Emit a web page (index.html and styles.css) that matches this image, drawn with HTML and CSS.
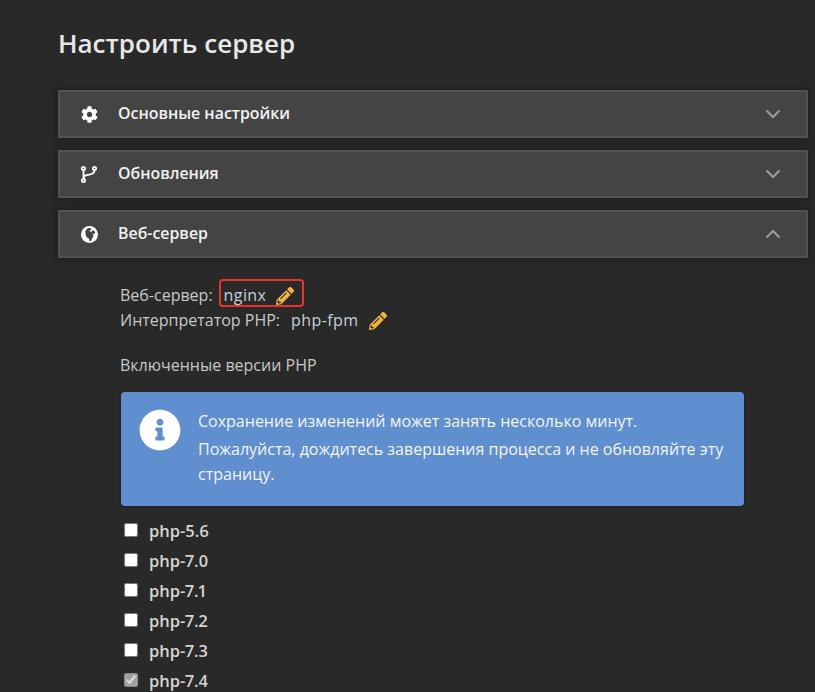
FILE: index.html
```html
<!DOCTYPE html>
<html lang="ru">
<head>
<meta charset="utf-8">
<title>Настроить сервер</title>
<link rel="stylesheet" href="styles.css">
</head>
<body>
<main class="page">
  <h1 class="title">Настроить сервер</h1>
  <section class="panel">
    <svg class="panel-icon" viewBox="0 0 512 512"><path fill="#fff" d="M487.4 315.7l-42.6-24.6c4.3-23.2 4.3-47 0-70.2l42.6-24.6c4.9-2.8 7.1-8.6 5.5-14-11.1-35.6-30-67.8-54.7-94.6-3.8-4.1-10-5.1-14.8-2.3L380.8 110c-17.9-15.4-38.5-27.3-60.8-35.1V25.8c0-5.6-3.9-10.5-9.4-11.7-36.7-8.2-74.3-7.8-109.2 0-5.5 1.2-9.4 6.1-9.4 11.7V75c-22.2 7.9-42.8 19.8-60.8 35.1L88.7 85.5c-4.9-2.8-11-1.9-14.8 2.3-24.7 26.7-43.6 58.9-54.7 94.6-1.7 5.4.6 11.2 5.5 14L67.3 221c-4.3 23.2-4.3 47 0 70.2l-42.6 24.6c-4.9 2.8-7.1 8.6-5.5 14 11.1 35.6 30 67.8 54.7 94.6 3.8 4.1 10 5.1 14.8 2.3l42.6-24.6c17.9 15.4 38.5 27.3 60.8 35.1v49.2c0 5.6 3.9 10.5 9.4 11.7 36.7 8.2 74.3 7.8 109.2 0 5.5-1.2 9.4-6.1 9.4-11.7v-49.2c22.2-7.9 42.8-19.8 60.8-35.1l42.6 24.6c4.9 2.8 11 1.9 14.8-2.3 24.7-26.7 43.6-58.9 54.7-94.6 1.5-5.5-.7-11.3-5.6-14.1zM256 336c-44.1 0-80-35.9-80-80s35.9-80 80-80 80 35.9 80 80-35.9 80-80 80z"/></svg>
    <span class="panel-title">Основные настройки</span>
    <svg class="chevron" viewBox="0 0 16 10"><path d="M1.500 1.500 8 8l6.500-6.500"/></svg>
  </section>
  <section class="panel">
    <svg class="panel-icon" viewBox="0 0 17 17"><g fill="none" stroke="#fff" stroke-width="1.800"><circle cx="2.500" cy="2.500" r="1.600"/><circle cx="2.500" cy="14.500" r="1.600"/><circle cx="13.500" cy="2.500" r="1.600"/><path d="M2.500 4.100v8.800M13.500 4.100c0 2.900-1.500 3.900-4 4.300-3.500.6-7 .4-7 4.500"/></g></svg>
    <span class="panel-title">Обновления</span>
    <svg class="chevron" viewBox="0 0 16 10"><path d="M1.500 1.500 8 8l6.500-6.500"/></svg>
  </section>
  <section class="panel">
    <svg class="panel-icon" viewBox="0 0 18 18"><circle cx="9" cy="9" r="9" fill="#fff"/><path fill="#444" d="M4.500 5.500 7 2.500l3-.5 1 2-2 1 1 1.500 2.500-2 2.500 1.500-.5 2.500-2.500-.5 1.500 2-1.500 3-1.500 2.500-1.500 1-.5-3-2.500-1.500-1-2.500z"/></svg>
    <span class="panel-title">Веб-сервер</span>
    <svg class="chevron" viewBox="0 0 16 10"><path d="M1.500 8.500 8 2l6.500 6.500"/></svg>
  </section>
  <div class="content">
    <div class="meta">
      <div class="meta-row"><span>Веб-сервер:</span><span class="mark"><span>nginx</span><svg class="pencil" viewBox="0 0 512 512"><path d="M497.9 142.1l-46.1 46.1c-4.7 4.7-12.3 4.7-17 0l-111-111c-4.7-4.7-4.7-12.3 0-17l46.1-46.1c18.7-18.7 49.1-18.7 67.9 0l60.1 60.1c18.8 18.7 18.8 49.1 0 67.9zM284.2 99.8L21.6 362.4.4 483.9c-2.9 16.4 11.4 30.6 27.8 27.8l121.5-21.3 262.6-262.6c4.7-4.7 4.7-12.3 0-17l-111-111c-4.8-4.7-12.4-4.7-17.1 0zM124.1 339.9c-5.5-5.5-5.5-14.3 0-19.8l154-154c5.500-5.500 14.300-5.500 19.800 0s5.500 14.300 0 19.800l-154 154c-5.500 5.500-14.300 5.500-19.800 0zM88 424h48v36.300l-64.500 11.300-31.100-31.100L51.700 376H88v48z"/></svg></span></div>
      <div class="meta-row"><span>Интерпретатор PHP:</span><span class="value"><span>php-fpm</span><svg class="pencil" viewBox="0 0 512 512"><path d="M497.9 142.1l-46.1 46.1c-4.7 4.7-12.3 4.7-17 0l-111-111c-4.7-4.7-4.7-12.3 0-17l46.1-46.1c18.7-18.7 49.1-18.7 67.9 0l60.1 60.1c18.8 18.7 18.8 49.1 0 67.9zM284.2 99.8L21.6 362.4.4 483.9c-2.9 16.4 11.4 30.6 27.8 27.8l121.5-21.3 262.6-262.6c4.7-4.7 4.7-12.3 0-17l-111-111c-4.8-4.7-12.4-4.7-17.1 0zM124.1 339.9c-5.5-5.5-5.5-14.3 0-19.8l154-154c5.500-5.500 14.300-5.500 19.800 0s5.500 14.300 0 19.800l-154 154c-5.500 5.500-14.300 5.500-19.800 0zM88 424h48v36.300l-64.500 11.300-31.100-31.100L51.700 376H88v48z"/></svg></span></div>
    </div>
    <p class="versions">Включенные версии PHP</p>
    <div class="notice">
      <svg class="notice-icon" viewBox="0 0 512 512"><path fill="#fff" d="M256 8C119 8 8 119 8 256s111 248 248 248 248-111 248-248S393 8 256 8zm0 110c23.200 0 42 18.800 42 42s-18.800 42-42 42-42-18.800-42-42 18.800-42 42-42zm56 254c0 6.600-5.400 12-12 12h-88c-6.600 0-12-5.400-12-12v-24c0-6.600 5.400-12 12-12h12v-64h-12c-6.600 0-12-5.400-12-12v-24c0-6.600 5.400-12 12-12h64c6.600 0 12 5.400 12 12v100h12c6.600 0 12 5.400 12 12v24z"/></svg>
      <div class="notice-text">
        <p>Сохранение изменений может занять несколько минут.</p>
        <p>Пожалуйста, дождитесь завершения процесса и не обновляйте эту страницу.</p>
      </div>
    </div>
    <ul class="php-list">
      <li><label class="php-item"><input type="checkbox"><span>php-5.6</span></label></li>
      <li><label class="php-item"><input type="checkbox"><span>php-7.0</span></label></li>
      <li><label class="php-item"><input type="checkbox"><span>php-7.1</span></label></li>
      <li><label class="php-item"><input type="checkbox"><span>php-7.2</span></label></li>
      <li><label class="php-item"><input type="checkbox"><span>php-7.3</span></label></li>
      <li><label class="php-item"><input type="checkbox" checked disabled><span>php-7.4</span></label></li>
    </ul>
  </div>
</main>
</body>
</html>
```
FILE: styles.css
```css
html, body {
  margin: 0;
  height: 692px;
  overflow: hidden;
  background: #292929;
}
body {
  font-family: "Open Sans", "Noto Sans", sans-serif;
  color: #c8c8c8;
  font-size: 16px;
}
.page {
  padding: 22px 7px 0 58px;
}
.title {
  margin: 0 0 26px;
  height: 42px;
  line-height: 42px;
  font-size: 26px;
  font-weight: 600;
  color: #e8e8e8;
}
.panel {
  box-sizing: border-box;
  height: 48px;
  margin-bottom: 12px;
  display: flex;
  align-items: center;
  background: #444;
  border: 2px solid #525252;
  box-shadow: 0 0 8px rgba(0, 0, 0, .4);
  padding: 0 25px 0 21px;
}
.panel-icon {
  width: 17px;
  height: 17px;
  flex: none;
}
.panel-title {
  margin-left: 20px;
  margin-top: -2px;
  font-size: 15.900px;
  font-weight: 600;
  color: #f2f2f2;
  flex: 1;
}
.chevron {
  width: 16px;
  height: 10px;
  fill: none;
  stroke: #9a9a9a;
  stroke-width: 2.200;
}
.content {
  padding: 13px 64px 0 62px;
}
.meta {
  line-height: 25px;
}
.meta-row {
  display: flex;
  align-items: center;
  height: 25px;
}
.mark, .value {
  display: inline-flex;
  align-items: center;
  gap: 10px;
  color: #c3d1dc;
  letter-spacing: .4px;
}
.mark {
  border: 2px solid #e8322a;
  border-radius: 4px;
  margin-left: 6px;
  margin-top: -6px;
  padding: 6px 8px 0 3px;
  height: 28px;
  box-sizing: border-box;
}
.value {
  margin-left: 11px;
  gap: 11px;
}
.pencil {
  width: 18px;
  height: 18px;
  fill: #f0b43c;
}
.versions {
  margin: 20px 0 15px;
  line-height: 24px;
}
.notice {
  display: flex;
  gap: 17px;
  margin-left: 1px;
  background: #5f8fcf;
  border-radius: 4px;
  padding: 17px 13px 19px 18px;
  box-shadow: 0 1px 3px rgba(0,0,0,.3);
}
.notice-icon {
  width: 42px;
  height: 42px;
  flex: none;
}
.notice-text {
  color: #f4f4f4;
  line-height: 25px;
}
.notice-text p {
  margin: 0 0 3px;
}
.notice-text p:last-child {
  margin-bottom: 0;
}
.php-list {
  list-style: none;
  margin: 9px 0 0;
  padding: 0;
}
.php-list li {
  height: 30px;
}
.php-item {
  display: flex;
  align-items: center;
  height: 30px;
  gap: 11px;
  font-size: 16.500px;
  font-weight: 600;
  font-variant-numeric: proportional-nums;
  color: #d5d5d5;
}
.php-item input {
  margin: 0 0 0 4px;
  width: 14px;
  height: 14px;
}
```
